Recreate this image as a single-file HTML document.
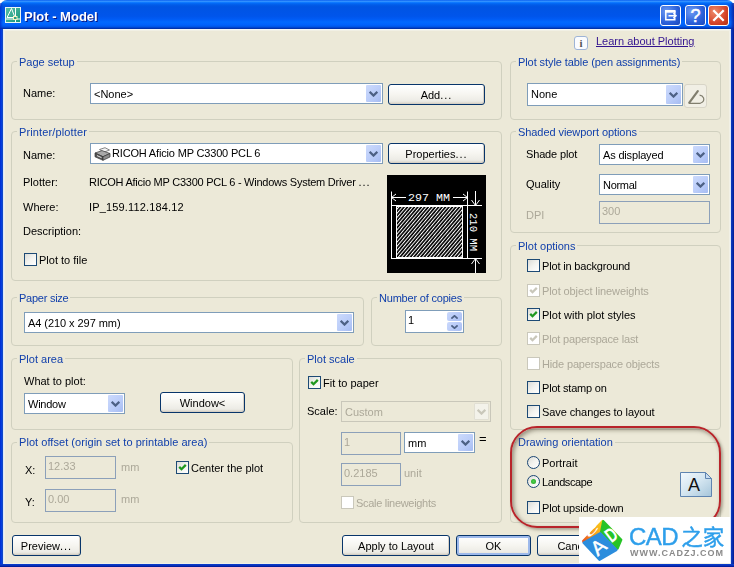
<!DOCTYPE html>
<html><head><meta charset="utf-8"><title>Plot - Model</title><style>
html,body{margin:0;padding:0}
body{width:734px;height:567px;overflow:hidden;position:relative;background:#fff;font-family:"Liberation Sans","Noto Sans CJK SC",sans-serif;font-size:11px;color:#000;filter:grayscale(0)}
.t,.gl,.ct,.btn,.ed span,.sp span,#ttl,.wm1,.wm2{will-change:transform}
.abs,.t,.gl,.grp,.cb,.ed,.btn,.ck,.rd,.sp,.pen,.red,.info,.wm,#tb,#bl,#br,#bb{position:absolute}
#bg{position:absolute;left:0;top:0;width:734px;height:567px;background:#ECE9D8;border-radius:7px 7px 0 0}
#tb{left:0;top:0;width:734px;height:29px;border-radius:7px 7px 0 0;background:linear-gradient(180deg,#0058EE 0%,#3A93FF 4%,#288EFF 6%,#127DFF 8%,#036FFC 10%,#0262EE 14%,#0057E5 20%,#0054E3 24%,#0055EB 56%,#005BF5 66%,#026AFE 76%,#0061FC 86%,#0057E5 92%,#0144D0 95%,#0038B4 97%,#002E9E 100%)}
#tl{position:absolute;left:3px;top:29px;width:726px;height:534px;border:1px solid #DDE8F8;border-top-color:#F6F8F6;box-shadow:inset 0 0 0 1px #F1F0E5}
#tb:after{content:'';position:absolute;right:0;top:3px;bottom:0;width:4px;background:linear-gradient(90deg,rgba(8,40,170,0),rgba(8,36,160,.9))}
#tb:before{content:'';position:absolute;left:0;top:3px;bottom:0;width:3px;background:linear-gradient(90deg,rgba(0,40,200,.7),rgba(0,50,210,0))}
#bl{left:0;top:29px;width:3px;height:538px;background:linear-gradient(90deg,#002CD0,#0440E0 55%,#1A4CB8)}
#br{left:731px;top:29px;width:3px;height:538px;background:linear-gradient(90deg,#0A3CC0,#0830B0 50%,#001A90)}
#bb{left:0;top:564px;width:734px;height:3px;background:linear-gradient(180deg,#0A40D0,#0830B8 50%,#001590)}
#ttl{position:absolute;left:24px;top:9px;color:#fff;font-weight:bold;font-size:13px;line-height:16px;text-shadow:1px 1px 0 #0A1883;letter-spacing:0}
.t{white-space:nowrap;line-height:13px}
.d{color:#ACA899}
.dots{letter-spacing:1px}
.grp{border:1px solid #D0D0BF;border-radius:4px}
.gl{white-space:nowrap;line-height:13px;color:#1240AB;background:#ECE9D8;padding:0 2px}
.cb{border:1px solid #7F9DB9;background:#fff}
.cb .ct{position:absolute;left:2.5px;top:4px;line-height:13px;white-space:nowrap}
.cb .dd{position:absolute;right:1px;top:1px;bottom:1px;width:15px;border-radius:1px;background:linear-gradient(135deg,#CCDAFC,#BBCDF9 55%,#A6BCF2)}
.cb .dd svg{position:absolute;left:3px;top:5px}
.cb.dis{border-color:#C9C7BA;background:#ECE9D8;color:#ACA899}
.cb.dis .dd{background:#F3F2EA;box-shadow:inset 0 0 0 1px #E1DFD3}
.ed{border:1px solid #8CA0B9;background:#ECE9D8;color:#ACA899}
.ed span{position:absolute;left:2px;top:3px;line-height:13px}
.btn{border:1px solid #08356A;border-radius:3px;text-align:center;background:linear-gradient(180deg,#FFFFFF 0%,#F6F5F0 50%,#ECEBE5 85%,#D6D0C5 100%);box-shadow:inset -1px -1px 0 #D6D0C5}
.btn.def{box-shadow:inset 0 0 0 2px #9DB9EB}
.ck{width:11px;height:11px;border:1px solid #1D4A75;background:linear-gradient(135deg,#DCDCD7,#F3F3EF 50%,#FFFFFF)}
.ck svg{position:absolute;left:0;top:0}
.ck.dis{border-color:#CAC8BB;background:#fff}
.rd{width:11px;height:11px;border:1px solid #1A4674;border-radius:50%;background:linear-gradient(135deg,#DCDCD7,#F3F3EF 50%,#FFFFFF)}
.rd i{position:absolute;left:3px;top:3px;width:5px;height:5px;border-radius:50%;background:radial-gradient(#4FD24F,#21A121)}
.sp{border:1px solid #7F9DB9;background:#fff}
.sp span{position:absolute;left:2px;top:3px;line-height:13px}
.sp b{position:absolute;right:1px;width:15px;height:9px;background:linear-gradient(135deg,#CBD9FC,#A9BEF3);border-radius:2px}
.sp b.u{top:1px}.sp b.dn{top:11px}
.sp b svg{position:absolute;left:4px;top:3px}
.pen{width:21px;height:22px;border:1px solid #D8D5C7;border-radius:3px;background:#F1EFE5}
.red{border:2px solid #B8242A;border-radius:27px;box-shadow:2px 2px 3px rgba(90,80,60,.45), inset 2px 2px 4px rgba(80,72,55,.55);box-sizing:border-box}
.info{width:12px;height:12px;border:1px solid #9EB4D6;border-radius:3px;background:#FBFCFE;font-family:"Liberation Serif",serif;font-weight:bold;font-size:11px;line-height:12px;text-align:center;color:#555}
.lnk{color:#33148F;text-decoration:underline}
.wm{background:#fff}
.wm1{font-size:24px;line-height:30px;color:#2E9FEB;-webkit-text-stroke:0.4px #2E9FEB;white-space:nowrap;letter-spacing:-0.5px}
.cj{font-size:21.500px;margin-left:3px;letter-spacing:0}
.wm2{font-size:9px;line-height:12px;font-weight:bold;color:#8A8A8A;white-space:nowrap;letter-spacing:1px}
.tbtn{position:absolute;top:5px;width:19px;height:19px;border:1px solid #fff;border-radius:3px;background:radial-gradient(circle at 30% 30%,#6D9BF3,#2A5FD9 60%,#1C48BB)}
.tbtn.x{background:radial-gradient(circle at 30% 30%,#EE8A6A,#D5452A 60%,#B5300F)}
.tbtn svg{position:absolute;left:0;top:0}
.pi{display:inline-block;vertical-align:top;margin:0 1px 0 0}
</style></head><body>
<div id="bg"></div><div id="tb"></div><div id="tl"></div><div id="bl"></div><div id="br"></div><div id="bb"></div>
<svg class="abs" style="left:5px;top:7px" width="16" height="16" viewBox="0 0 16 16"><defs><linearGradient id="ig" x1="0" y1="0" x2="1" y2="1"><stop offset="0" stop-color="#5CC0A6"/><stop offset="1" stop-color="#12957C"/></linearGradient></defs><rect x="0.5" y="0.5" width="15" height="15" fill="url(#ig)" stroke="#EAF6F2"/><path d="M2 10.500 L6.500 1.500 L10 10.500 Z M10.500 1 V15 M1 12 H15" stroke="#fff" fill="none" stroke-width="1"/><rect x="8.500" y="9.500" width="3.500" height="3" fill="#2A9F88" stroke="#FFF8C0" stroke-width="0.9"/></svg>
<div id="ttl">Plot - Model</div>
<div class="tbtn" style="left:660px"><svg width="19" height="19" viewBox="0 0 19 19"><path d="M13.800 8 V5.500 H4.800 V13.800 H13.800 V11.500" fill="none" stroke="#fff" stroke-width="1.500"/><path d="M4 5.300 H14.500" stroke="#fff" stroke-width="2.600"/><path d="M7.500 9.800 H15 M12.300 7.300 L15 9.800 L12.300 12.300" stroke="#fff" stroke-width="1.500" fill="none"/></svg></div>
<div class="tbtn" style="left:685px"><svg width="19" height="19" viewBox="0 0 19 19"><text x="9.500" y="16.200" text-anchor="middle" font-family="Liberation Sans, sans-serif" font-size="18" fill="#fff" stroke="#fff" stroke-width="0.500">?</text></svg></div>
<div class="tbtn x" style="left:708px"><svg width="19" height="19" viewBox="0 0 19 19"><path d="M4.300 4.300 L14.700 14.700 M14.700 4.300 L4.300 14.700" stroke="#fff" stroke-width="2.300"/></svg></div>

<div class="grp" style="left:11px;top:61px;width:489px;height:57px"></div>
<span class="gl" style="left:17px;top:56px">Page setup</span>
<div class="grp" style="left:11px;top:131px;width:489px;height:148px"></div>
<span class="gl" style="left:17px;top:126px"><span style="letter-spacing:0.13px">Printer/plotter</span></span>
<div class="grp" style="left:11px;top:297px;width:351px;height:47px"></div>
<span class="gl" style="left:17px;top:292px"><span style="letter-spacing:-0.25px">Paper size</span></span>
<div class="grp" style="left:371px;top:297px;width:129px;height:47px"></div>
<span class="gl" style="left:377px;top:292px"><span style="letter-spacing:-0.2px">Number of copies</span></span>
<div class="grp" style="left:11px;top:358px;width:280px;height:70px"></div>
<span class="gl" style="left:17px;top:353px">Plot area</span>
<div class="grp" style="left:11px;top:442px;width:280px;height:79px"></div>
<span class="gl" style="left:17px;top:436px"><span style="letter-spacing:0.05px">Plot offset (origin set to printable area)</span></span>
<div class="grp" style="left:299px;top:358px;width:201px;height:163px"></div>
<span class="gl" style="left:305px;top:353px">Plot scale</span>
<div class="grp" style="left:510px;top:61px;width:209px;height:57px"></div>
<span class="gl" style="left:516px;top:56px"><span style="letter-spacing:-0.08px">Plot style table (pen assignments)</span></span>
<div class="grp" style="left:510px;top:131px;width:209px;height:100px"></div>
<span class="gl" style="left:516px;top:126px"><span style="letter-spacing:-0.07px">Shaded viewport options</span></span>
<div class="grp" style="left:510px;top:245px;width:209px;height:183px"></div>
<span class="gl" style="left:516px;top:240px">Plot options</span>
<div class="grp" style="left:510px;top:442px;width:209px;height:79px"></div>
<span class="gl" style="left:516px;top:436px">Drawing orientation</span>
<span class="t " style="left:23px;top:87px;">Name:</span>
<div class="cb" style="left:90px;top:83px;width:291px;height:19px"><span class="ct" style="top:4px">&lt;None&gt;</span><span class="dd"><svg style="top:6px" width="9" height="6" viewBox="0 0 9 6"><path d="M0.7 0.8 L4.5 4.6 L8.3 0.8" fill="none" stroke="#4D6185" stroke-width="2.2"/></svg></span></div>
<div class="btn" style="left:388px;top:84px;width:95px;height:19px;line-height:20px">Add<span class="dots">...</span></div>
<span class="t " style="left:23px;top:149px;">Name:</span>
<div class="cb" style="left:90px;top:143px;width:291px;height:19px"><span class="ct" style="top:3px"><svg class="pi" width="17" height="14" viewBox="0 0 17 14"><path d="M5.500 2.500 L11 0.700 L15.500 3 L10 5.200 Z" fill="#F4F4F4" stroke="#555" stroke-width="0.700"/><path d="M1 6 L8 3.600 L16 6.500 L9 9.700 Z" fill="#A8A8A8" stroke="#3A3A3A" stroke-width="0.700"/><path d="M1 6 L9 9.700 V13.300 L1 9.800 Z" fill="#555" stroke="#333" stroke-width="0.700"/><path d="M9 9.700 L16 6.500 V10 L9 13.300 Z" fill="#8C8C8C" stroke="#333" stroke-width="0.700"/><path d="M3 8.600 L7.500 10.600" stroke="#E8E8E8" stroke-width="1"/></svg><span style="letter-spacing:-0.17px">RICOH Aficio MP C3300 PCL 6</span></span><span class="dd"><svg style="top:6px" width="9" height="6" viewBox="0 0 9 6"><path d="M0.7 0.8 L4.5 4.6 L8.3 0.8" fill="none" stroke="#4D6185" stroke-width="2.2"/></svg></span></div>
<div class="btn" style="left:388px;top:143px;width:95px;height:19px;line-height:20px">Properties<span class="dots">...</span></div>
<span class="t " style="left:23px;top:176px;">Plotter:</span>
<span class="t " style="left:89px;top:176px;letter-spacing:-0.25px">RICOH Aficio MP C3300 PCL 6 - Windows System Driver&nbsp;<span class="dots">...</span></span>
<span class="t " style="left:23px;top:201px;">Where:</span>
<span class="t " style="left:89px;top:201px;"><span style="letter-spacing:0.15px">IP_159.112.184.12</span></span>
<span class="t " style="left:23px;top:225px;">Description:</span>
<div class="ck" style="left:24px;top:253px"></div>
<span class="t " style="left:39px;top:254px">Plot to file</span>
<div class="cb" style="left:24px;top:312px;width:328px;height:19px"><span class="ct" style="top:4px"><span style="letter-spacing:-0.06px">A4 (210 x 297 mm)</span></span><span class="dd"><svg style="top:6px" width="9" height="6" viewBox="0 0 9 6"><path d="M0.7 0.8 L4.5 4.6 L8.3 0.8" fill="none" stroke="#4D6185" stroke-width="2.2"/></svg></span></div>
<div class="sp" style="left:405px;top:310px;width:57px;height:21px"><span>1</span><b class="u"><svg width="7" height="4" viewBox="0 0 7 4"><path d="M0.4 3.6 L3.5 0.8 L6.6 3.6" fill="none" stroke="#4D6185" stroke-width="1.7"/></svg></b><b class="dn"><svg width="7" height="4" viewBox="0 0 7 4"><path d="M0.4 0.4 L3.5 3.2 L6.6 0.4" fill="none" stroke="#4D6185" stroke-width="1.7"/></svg></b></div>
<span class="t " style="left:24px;top:375px;">What to plot:</span>
<div class="cb" style="left:24px;top:393px;width:99px;height:19px"><span class="ct" style="top:4px"><span style="letter-spacing:-0.25px">Window</span></span><span class="dd"><svg style="top:6px" width="9" height="6" viewBox="0 0 9 6"><path d="M0.7 0.8 L4.5 4.6 L8.3 0.8" fill="none" stroke="#4D6185" stroke-width="2.2"/></svg></span></div>
<div class="btn" style="left:160px;top:392px;width:83px;height:19px;line-height:20px">Window&lt;</div>
<span class="t " style="left:25px;top:464px;">X:</span>
<div class="ed" style="left:45px;top:456px;width:69px;height:21px"><span>12.33</span></div>
<span class="t d" style="left:121px;top:461px;">mm</span>
<span class="t " style="left:25px;top:496px;">Y:</span>
<div class="ed" style="left:45px;top:489px;width:69px;height:21px"><span>0.00</span></div>
<span class="t d" style="left:121px;top:493px;">mm</span>
<div class="ck" style="left:176px;top:461px"><svg width="11" height="11" viewBox="0 0 11 11"><path d="M2.2 4.9 L4.5 7.2 L8.8 2.9" fill="none" stroke="#209820" stroke-width="2.3"/></svg></div>
<span class="t " style="left:191px;top:462px">Center the plot</span>
<div class="ck" style="left:308px;top:376px"><svg width="11" height="11" viewBox="0 0 11 11"><path d="M2.2 4.9 L4.5 7.2 L8.8 2.9" fill="none" stroke="#209820" stroke-width="2.3"/></svg></div>
<span class="t " style="left:323px;top:377px">Fit to paper</span>
<span class="t " style="left:307px;top:405px;">Scale:</span>
<div class="cb dis" style="left:341px;top:401px;width:148px;height:19px"><span class="ct" style="top:4px">Custom</span><span class="dd"><svg style="top:6px" width="9" height="6" viewBox="0 0 9 6"><path d="M0.7 0.8 L4.5 4.6 L8.3 0.8" fill="none" stroke="#C9C7BA" stroke-width="2.2"/></svg></span></div>
<div class="ed" style="left:341px;top:432px;width:58px;height:21px"><span>1</span></div>
<div class="cb" style="left:404px;top:432px;width:69px;height:19px"><span class="ct" style="top:4px">mm</span><span class="dd"><svg style="top:6px" width="9" height="6" viewBox="0 0 9 6"><path d="M0.7 0.8 L4.5 4.6 L8.3 0.8" fill="none" stroke="#4D6185" stroke-width="2.2"/></svg></span></div>
<span class="t " style="left:479px;top:432px;font-size:13px">=</span>
<div class="ed" style="left:341px;top:463px;width:58px;height:21px"><span>0.2185</span></div>
<span class="t d" style="left:404px;top:467px;">unit</span>
<div class="ck dis" style="left:341px;top:496px"></div>
<span class="t d" style="left:356px;top:497px"><span style="letter-spacing:-0.3px">Scale lineweights</span></span>
<div class="cb" style="left:527px;top:83px;width:154px;height:21px"><span class="ct" style="top:4px">None</span><span class="dd"><svg style="top:7px" width="9" height="6" viewBox="0 0 9 6"><path d="M0.7 0.8 L4.5 4.6 L8.3 0.8" fill="none" stroke="#4D6185" stroke-width="2.2"/></svg></span></div>
<div class="pen" style="left:684px;top:84px"><svg style="position:absolute;left:0.5px;top:0px" width="21" height="21" viewBox="0 0 21 21"><path d="M3.3 17.6 L11.8 6.2" fill="none" stroke="#817E6E" stroke-width="2.2" stroke-linecap="round"/><path d="M2.8 18.3 H14.2 Q18.6 16.8 17.6 13 Q16.6 10.5 13.6 10.2" fill="none" stroke="#817E6E" stroke-width="1.2"/></svg></div>
<span class="t " style="left:526px;top:148px;"><span style="letter-spacing:-0.15px">Shade plot</span></span>
<div class="cb" style="left:599px;top:144px;width:109px;height:19px"><span class="ct" style="top:4px"><span style="letter-spacing:-0.17px">As displayed</span></span><span class="dd"><svg style="top:6px" width="9" height="6" viewBox="0 0 9 6"><path d="M0.7 0.8 L4.5 4.6 L8.3 0.8" fill="none" stroke="#4D6185" stroke-width="2.2"/></svg></span></div>
<span class="t " style="left:526px;top:178px;">Quality</span>
<div class="cb" style="left:599px;top:174px;width:109px;height:19px"><span class="ct" style="top:4px"><span style="letter-spacing:-0.3px">Normal</span></span><span class="dd"><svg style="top:6px" width="9" height="6" viewBox="0 0 9 6"><path d="M0.7 0.8 L4.5 4.6 L8.3 0.8" fill="none" stroke="#4D6185" stroke-width="2.2"/></svg></span></div>
<span class="t d" style="left:526px;top:209px;">DPI</span>
<div class="ed" style="left:599px;top:201px;width:109px;height:21px"><span>300</span></div>
<div class="ck" style="left:527px;top:259px"></div>
<span class="t " style="left:542px;top:260px"><span style="letter-spacing:-0.17px">Plot in background</span></span>
<div class="ck dis" style="left:527px;top:284px"><svg width="11" height="11" viewBox="0 0 11 11"><path d="M2.2 4.9 L4.5 7.2 L8.8 2.9" fill="none" stroke="#C9C7BA" stroke-width="2.3"/></svg></div>
<span class="t d" style="left:542px;top:285px"><span style="letter-spacing:-0.09px">Plot object lineweights</span></span>
<div class="ck" style="left:527px;top:308px"><svg width="11" height="11" viewBox="0 0 11 11"><path d="M2.2 4.9 L4.5 7.2 L8.8 2.9" fill="none" stroke="#209820" stroke-width="2.3"/></svg></div>
<span class="t " style="left:542px;top:309px">Plot with plot styles</span>
<div class="ck dis" style="left:527px;top:332px"><svg width="11" height="11" viewBox="0 0 11 11"><path d="M2.2 4.9 L4.5 7.2 L8.8 2.9" fill="none" stroke="#C9C7BA" stroke-width="2.3"/></svg></div>
<span class="t d" style="left:542px;top:333px"><span style="letter-spacing:-0.18px">Plot paperspace last</span></span>
<div class="ck dis" style="left:527px;top:357px"></div>
<span class="t d" style="left:542px;top:358px"><span style="letter-spacing:-0.15px">Hide paperspace objects</span></span>
<div class="ck" style="left:527px;top:381px"></div>
<span class="t " style="left:542px;top:382px"><span style="letter-spacing:-0.2px">Plot stamp on</span></span>
<div class="ck" style="left:527px;top:405px"></div>
<span class="t " style="left:542px;top:406px"><span style="letter-spacing:-0.09px">Save changes to layout</span></span>
<div class="rd" style="left:527px;top:456px"></div>
<span class="t" style="left:542px;top:457px">Portrait</span>
<div class="rd" style="left:527px;top:475px"><i></i></div>
<span class="t" style="left:542px;top:476px"><span style="letter-spacing:-0.4px">Landscape</span></span>
<div class="ck" style="left:527px;top:501px"></div>
<span class="t " style="left:542px;top:502px"><span style="letter-spacing:-0.19px">Plot upside-down</span></span>
<svg class="abs" style="left:680px;top:472px" width="32" height="25" viewBox="0 0 32 25">
<defs><linearGradient id="lg" x1="0" y1="0" x2="1" y2="1"><stop offset="0" stop-color="#F3F9FD"/><stop offset="0.5" stop-color="#D3E5F0"/><stop offset="1" stop-color="#A5C5DA"/></linearGradient></defs>
<path d="M0.5 0.5 H25.5 L31.5 6.5 V24.500 H0.5 Z" fill="url(#lg)" stroke="#5E84B0" stroke-width="1"/>
<path d="M25.5 0.5 V6.5 H31.5 Z" fill="#C9DDF0" stroke="#5E84B0" stroke-width="1"/>
<text x="14" y="19" text-anchor="middle" font-family="Liberation Sans, sans-serif" font-size="18" fill="#111">A</text></svg>
<div class="btn" style="left:12px;top:535px;width:67px;height:19px;line-height:20px">Preview<span class="dots">...</span></div>
<div class="btn" style="left:342px;top:535px;width:106px;height:19px;line-height:20px">Apply to Layout</div>
<div class="btn def" style="left:456px;top:535px;width:73px;height:19px;line-height:20px">OK</div>
<div class="btn" style="left:537px;top:535px;width:73px;height:19px;line-height:20px">Cancel</div>
<div class="btn" style="left:618px;top:535px;width:73px;height:19px;line-height:20px">Help</div>
<div class="red" style="left:510px;top:426px;width:211px;height:102px"></div>
<div class="info" style="left:574px;top:36px">i</div>
<span class="t lnk" style="left:596px;top:35px">Learn about Plotting</span>
<svg class="abs" style="left:387px;top:175px" width="99" height="98" viewBox="0 0 99 98" shape-rendering="auto">
<defs><pattern id="h" width="4" height="2.65" patternUnits="userSpaceOnUse" patternTransform="rotate(-50)"><rect width="4" height="2.65" fill="#000"/><rect width="4" height="1" fill="#fff"/></pattern></defs>
<rect width="99" height="98" fill="#000"/>
<rect x="4.500" y="30.500" width="76" height="53" fill="#000" stroke="#fff" stroke-width="1"/>
<rect x="9.500" y="31.500" width="66" height="51" fill="url(#h)" stroke="#fff" stroke-width="1"/>
<g stroke="#fff" stroke-width="1" fill="none">
<path d="M4.500 16.500 V30 M80.500 16.500 V30 M4.500 22.500 H19 M66 22.500 H80.500 M9 19 L4.500 22.500 L9 26 M76 19 L80.500 22.500 L76 26"/>
<path d="M81 30.500 H95 M81 83.500 H95 M88.500 16 V30 M84.500 25 L88.500 30.500 L92.500 25 M88.500 98 V84 M84.500 89 L88.500 83.500 L92.500 89"/>
</g>
<text x="21" y="26" font-family="Liberation Mono, monospace" font-size="10.5" fill="#fff" textLength="42" lengthAdjust="spacingAndGlyphs">297 MM</text>
<text transform="translate(82.500,38) rotate(90)" font-family="Liberation Mono, monospace" font-size="10.5" fill="#fff" textLength="38" lengthAdjust="spacingAndGlyphs">210 MM</text>
</svg>
<div class="wm" style="left:579px;top:517px;width:151px;height:46px"></div>
<svg class="abs" style="left:576px;top:514px" width="56" height="50" viewBox="0 0 56 50">
<defs><linearGradient id="og" x1="0" y1="1" x2="1" y2="0"><stop offset="0" stop-color="#E8501E"/><stop offset="0.5" stop-color="#F9A11B"/><stop offset="1" stop-color="#F6D21A"/></linearGradient></defs>
<path d="M7.200 27 L26.600 7 L27.500 8 L24.400 18 L8 28.500 Z" fill="url(#og)" stroke="url(#og)" stroke-width="2.400" stroke-linejoin="round"/>
<path d="M27.300 7.300 L45.200 25.800 L41.500 34.500 L25.200 18 Z" fill="#27C427" stroke="#27C427" stroke-width="2.400" stroke-linejoin="round"/>
<path d="M7.600 28.800 L24.200 19.300 L40.400 35.900 L23.500 45.800 Z" fill="#2B8DDD" stroke="#2B8DDD" stroke-width="2.400" stroke-linejoin="round"/>
<text transform="translate(16.600,17.300) rotate(-46) scale(1.700,0.600)" text-anchor="middle" y="4.300" font-family="Liberation Sans, sans-serif" font-weight="bold" font-size="12" fill="#fff">C</text>
<text transform="translate(35.200,20.600) rotate(-38) scale(0.700,1)" text-anchor="middle" y="7" font-family="Liberation Sans, sans-serif" font-weight="bold" font-size="20" fill="#fff">D</text>
<text transform="translate(22.300,32.800) rotate(-40)" text-anchor="middle" y="7" font-family="Liberation Sans, sans-serif" font-size="20" fill="#fff" stroke="#fff" stroke-width="0.500">A</text>
</svg>
<span class="abs wm1" style="left:629px;top:522px">CAD<span class="cj">之家</span></span><span class="abs wm2" style="left:630px;top:547px">WWW.CADZJ.COM</span>
</body></html>
